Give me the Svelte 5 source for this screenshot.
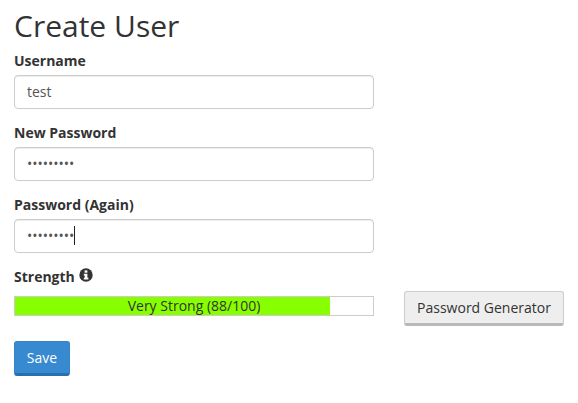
<script>
	let username = "test";
	let password = "secret123";
	let score = 88;
</script>

<style>
	:global(body) {
		margin: 0;
		background: #fff;
		color: #333;
		font-family: "Open Sans", sans-serif;
		font-size: 14px;
	}

	.page {
		padding: 0 14px;
	}

	h1 {
		margin: 0;
		padding-top: 7px;
		font-size: 30px;
		font-weight: 400;
		line-height: 38px;
		color: #333;
	}

	.field {
		width: 360px;
		margin-bottom: 14px;
	}

	label,
	.label {
		display: block;
		height: 20px;
		line-height: 20px;
		margin-bottom: 4px;
		font-weight: 700;
		font-size: 14px;
	}

	.first {
		margin-top: 6px;
	}

	.input-wrap {
		position: relative;
	}

	input {
		display: block;
		box-sizing: border-box;
		width: 100%;
		height: 34px;
		padding: 5px 12px 7px;
		border: 1px solid #ccc;
		border-radius: 4px;
		box-shadow: inset 0 1px 1px rgba(0, 0, 0, 0.075);
		font-family: inherit;
		font-size: 14px;
		color: #555;
		background: #fff;
		outline: none;
	}

	.caret {
		position: absolute;
		left: 60px;
		top: 7px;
		width: 1px;
		height: 19px;
		background: #222;
	}

	.info {
		display: inline-block;
		vertical-align: 0;
		margin-left: 1px;
	}

	.strength-row {
		display: flex;
		align-items: flex-start;
		gap: 30px;
	}

	.bar {
		position: relative;
		box-sizing: border-box;
		width: 360px;
		height: 20px;
		margin-top: 5px;
		border: 1px solid #ccc;
		background: #fff;
	}

	.fill {
		height: 100%;
		background: #8f0;
	}

	.bar-text {
		position: absolute;
		inset: 0;
		text-align: center;
		line-height: 18px;
		font-size: 14px;
		color: #333;
	}

	button {
		box-sizing: border-box;
		font-family: inherit;
		font-size: 14px;
		border-radius: 3px;
		cursor: pointer;
	}

	.generator {
		width: 160px;
		height: 35px;
		padding: 0;
		border: 1px solid #ccc;
		border-bottom: 3px solid #b9b9b9;
		background: #eee;
		color: #333;
	}

	.save {
		display: block;
		width: 56px;
		height: 35px;
		margin-top: 15px;
		padding: 0;
		border: 1px solid #3484c9;
		border-bottom: 3px solid #2a6fac;
		background: #3789d0;
		color: #fff;
	}
</style>

<div class="page">
	<h1>Create User</h1>

	<div class="field first">
		<label for="username">Username</label>
		<input id="username" type="text" value={username} />
	</div>

	<div class="field">
		<label for="new-password">New Password</label>
		<input id="new-password" type="password" value={password} />
	</div>

	<div class="field">
		<label for="password-again">Password (Again)</label>
		<div class="input-wrap">
			<input id="password-again" type="password" value={password} />
			<span class="caret"></span>
		</div>
	</div>

	<div class="label">
		Strength
		<svg class="info" width="14" height="14" viewBox="0 0 14 14" aria-hidden="true">
			<circle cx="7" cy="7" r="6.7" fill="#333" />
			<rect x="5.6" y="2.4" width="2.8" height="2.3" fill="#fff" />
			<path d="M4.8 5.7H8.4V9.7H9.4V11.4H4.8V9.7H5.7V7.4H4.8Z" fill="#fff" />
		</svg>
	</div>

	<div class="strength-row">
		<div class="bar">
			<div class="fill" style="width: {score}%"></div>
			<div class="bar-text">Very Strong ({score}/100)</div>
		</div>
		<button class="generator" type="button">Password Generator</button>
	</div>

	<button class="save" type="button">Save</button>
</div>
